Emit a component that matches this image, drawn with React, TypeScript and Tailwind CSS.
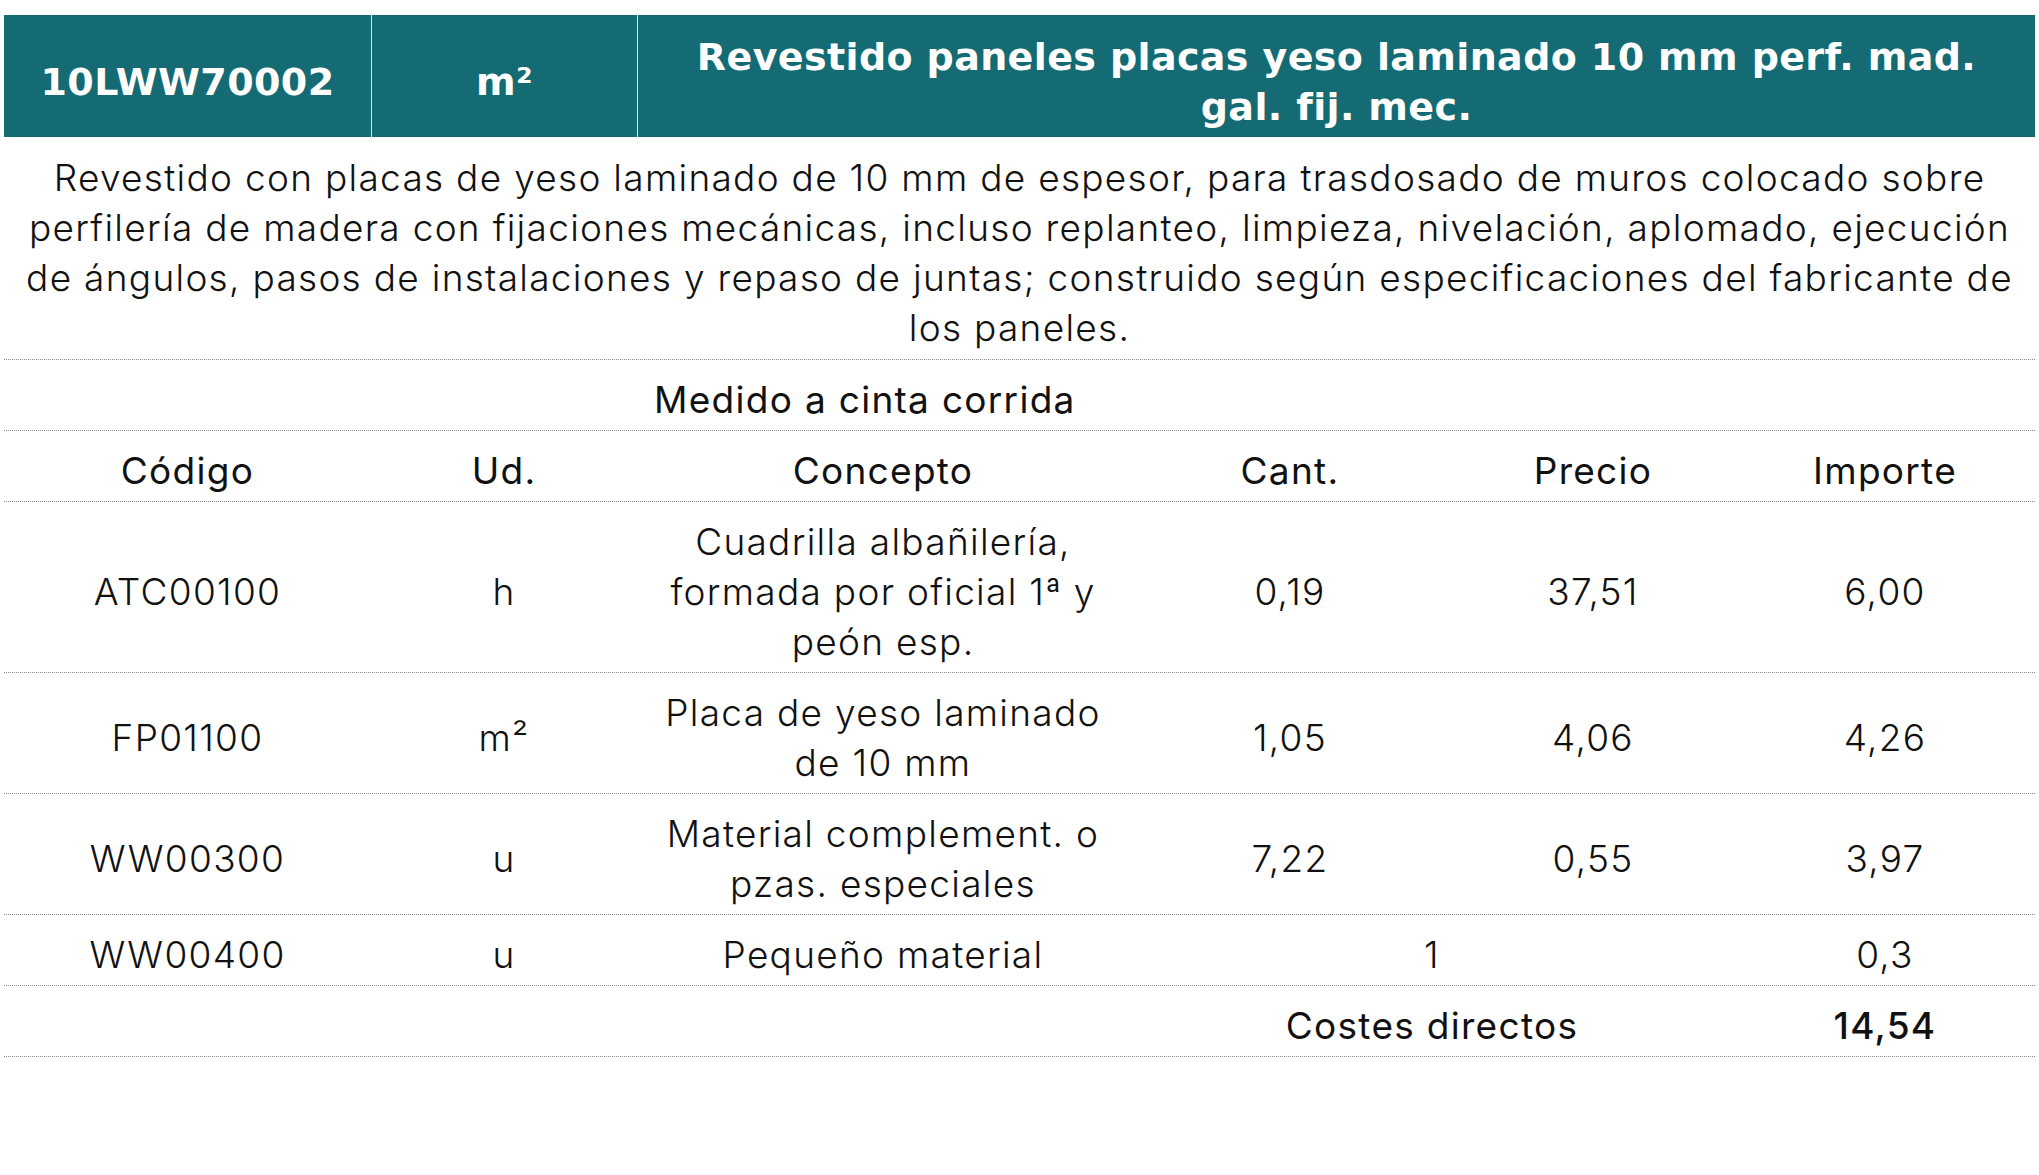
import React from 'react';

// ── Data ──────────────────────────────────────────────────────────────────
type Row = {
  code: string;
  ud: string;
  concept: string[];
  cant: string;
  precio: string;
  importe: string;
};

const ROWS: Row[] = [
  { code: 'ATC00100', ud: 'h',  concept: ['Cuadrilla albañilería,', 'formada por oficial 1ª y', 'peón esp.'], cant: '0,19', precio: '37,51', importe: '6,00' },
  { code: 'FP01100',  ud: 'm²', concept: ['Placa de yeso laminado', 'de 10 mm'],                               cant: '1,05', precio: '4,06',  importe: '4,26' },
  { code: 'WW00300',  ud: 'u',  concept: ['Material complement. o', 'pzas. especiales'],                       cant: '7,22', precio: '0,55',  importe: '3,97' },
];

const DESCRIPTION = [
  'Revestido con placas de yeso laminado de 10 mm de espesor, para trasdosado de muros colocado sobre',
  'perfilería de madera con fijaciones mecánicas, incluso replanteo, limpieza, nivelación, aplomado, ejecución',
  'de ángulos, pasos de instalaciones y repaso de juntas; construido según especificaciones del fabricante de',
  'los paneles.',
];

const GRID = 'grid grid-cols-[367px_266px_492px_322px_284px_300px]';
const LINE = 'border-b border-dotted border-[#8a8a8a]';
// text sits a bit low in its line box, as in the source
const CELL = 'flex flex-col items-center justify-center text-center pt-[15px] pb-[5px] whitespace-nowrap';

export default function App() {
  return (
    <div className="w-[2039px] h-[1175px] bg-white text-[#111] font-['Inter',sans-serif] text-[37px] leading-[50px] tracking-[0.035em] font-light">
      <div className="pt-[15px] px-[4px]">

        {/* Header bar */}
        <div className="grid grid-cols-[367px_266px_1398px] h-[122px] bg-[#146b74] text-white font-bold font-['DejaVu_Sans',sans-serif] text-[38px] tracking-[0.01em]">
          <div className="flex items-center justify-center pt-[12px]">10LWW70002</div>
          <div className="flex items-center justify-center pt-[12px] border-l border-white/80">m²</div>
          <div className="flex flex-col items-center justify-center pt-[17px] pb-[5px] border-l border-white/80 text-center whitespace-nowrap">
            <span>Revestido paneles placas yeso laminado 10 mm perf. mad.</span>
            <span>gal. fij. mec.</span>
          </div>
        </div>

        {/* Description */}
        <div className={`${LINE} flex flex-col items-center pt-[16px] pb-[6px] text-center`}>
          {DESCRIPTION.map(l => (
            <span key={l} className="whitespace-nowrap">{l}</span>
          ))}
        </div>

        {/* Measurement */}
        <div className={`${LINE} pt-[15px] pb-[5px] pl-[650px] font-normal`}>Medido a cinta corrida</div>

        {/* Column headers */}
        <div className={`${GRID} ${LINE} font-normal`}>
          {['Código', 'Ud.', 'Concepto', 'Cant.', 'Precio', 'Importe'].map(h => (
            <div key={h} className={CELL}>{h}</div>
          ))}
        </div>

        {/* Rows */}
        {ROWS.map(r => (
          <div key={r.code} className={`${GRID} ${LINE}`}>
            <div className={CELL}>{r.code}</div>
            <div className={CELL}>{r.ud}</div>
            <div className={CELL}>
              {r.concept.map(c => <span key={c}>{c}</span>)}
            </div>
            <div className={CELL}>{r.cant}</div>
            <div className={CELL}>{r.precio}</div>
            <div className={CELL}>{r.importe}</div>
          </div>
        ))}

        <div className={`${GRID} ${LINE}`}>
          <div className={CELL}>WW00400</div>
          <div className={CELL}>u</div>
          <div className={CELL}>Pequeño material</div>
          <div className={`${CELL} col-span-2`}>1</div>
          <div className={CELL}>0,3</div>
        </div>

        {/* Total */}
        <div className={`${GRID} ${LINE} font-normal`}>
          <div className="col-span-3" />
          <div className={`${CELL} col-span-2`}>Costes directos</div>
          <div className={`${CELL} font-medium`}>14,54</div>
        </div>

      </div>
    </div>
  );
}
